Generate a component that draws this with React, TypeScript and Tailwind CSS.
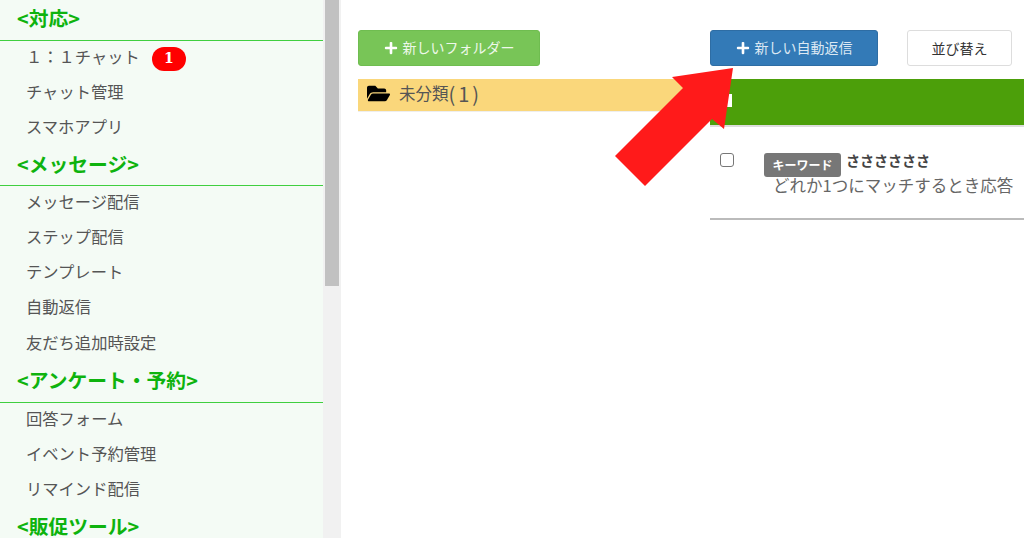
import { FaFolderOpen, FaPlus } from "react-icons/fa";

const sections = [
  { title: "<対応>", height: "h-[41px]", items: ["１：１チャット", "チャット管理", "スマホアプリ"] },
  { title: "<メッセージ>", height: "h-[39px]", items: ["メッセージ配信", "ステップ配信", "テンプレート", "自動返信", "友だち追加時設定"] },
  { title: "<アンケート・予約>", height: "h-[41px]", items: ["回答フォーム", "イベント予約管理", "リマインド配信"] },
  { title: "<販促ツール>", height: "h-[40px]", items: [] as string[] },
];

function Sidebar() {
  return (
    <aside className="w-[323px] shrink-0 bg-[#f4fbf5] overflow-hidden">
      {sections.map((s) => (
        <div key={s.title}>
          <div className={`${s.height} flex items-center pl-[17px] pb-[4px] border-b border-[#3fcf3f] text-[19.8px] leading-none font-bold text-[#0eb30e]`}>
            {s.title}
          </div>
          {s.items.map((item) => (
            <div key={item} className="h-[35.25px] flex items-center pl-[26px] text-[16.3px] text-[#555555]">
              <span className="pb-[5px]">{item}</span>
              {item === "１：１チャット" && (
                <span className="ml-[12px] w-[34px] h-[24px] rounded-full bg-[#ff0000] text-white text-[14px] font-bold flex items-center justify-center font-['DejaVu_Serif',serif]">
                  1
                </span>
              )}
            </div>
          ))}
        </div>
      ))}
    </aside>
  );
}

function Scrollbar() {
  return (
    <div className="w-[18px] shrink-0 bg-[#f1f1f1] pl-[2px] pr-[2px]">
      <div className="h-[286px] bg-[#c1c1c1]" />
    </div>
  );
}

function Arrow() {
  return (
    <svg className="absolute left-[610px] top-[64px]" width="128" height="126" viewBox="610 64 128 126">
      <polygon points="672,77 733,68 724,129 712,119 645,186 615,156 683,88" fill="#ff1a1a" />
    </svg>
  );
}

export default function App() {
  return (
    <div className="relative w-[1024px] h-[538px] overflow-hidden bg-white flex font-['Noto_Sans_CJK_JP','Noto_Sans',sans-serif]">
      <Sidebar />
      <Scrollbar />
      <main className="flex-1 flex pt-[30px] pl-[17px] min-w-0">
        <div className="w-[352px] shrink-0">
          <button className="w-[182px] h-[36px] rounded-[3px] bg-[#78c557] border border-[#6fbd50] text-[#eef8ea] text-[14px] flex items-center justify-center gap-[5px]">
            <FaPlus className="text-white text-[14px]" />
            <span className="pb-[1px]">新しいフォルダー</span>
          </button>
          <div className="mt-[13px] h-[33px] bg-[#fad77b] border-b border-[#eeeeee] flex items-center pl-[9px] pb-[3px] text-[16.5px] text-[#555555]">
            <FaFolderOpen className="text-black text-[23px] mr-[9px]" />
            未分類<span className="text-[20px] tracking-[3px]">(1)</span>
          </div>
        </div>
        <div className="flex-1 min-w-0">
          <div className="flex pr-[12px]">
            <button className="w-[168px] h-[36px] rounded-[3px] bg-[#337ab7] border border-[#2e6da4] text-[#dce8f3] text-[14px] flex items-center justify-center gap-[5px]">
              <FaPlus className="text-white text-[14px]" />
              <span className="pb-[1px]">新しい自動返信</span>
            </button>
            <button className="ml-auto w-[105px] h-[36px] rounded-[3px] bg-white border border-[#dddddd] text-[#333333] text-[14px]">
              並び替え
            </button>
          </div>
          <div className="mt-[13px] h-[48px] bg-[#4c9f0a] border-b-2 border-[#dddddd] pt-[15px] pl-[12px]">
            <div className="w-[10px] h-[13px] bg-white" />
          </div>
          <div className="h-[93px] border-b-2 border-[#bbbbbb] flex pt-[26px] pl-[10px]">
            <input type="checkbox" readOnly className="w-[14px] h-[14px] appearance-none rounded-[3px] border border-[#777777] bg-white" />
            <div className="ml-[30px] min-w-0">
              <div className="flex items-center h-[24px]">
                <span className="w-[77px] h-[24px] rounded-[3px] bg-[#777777] text-white text-[12px] font-bold flex items-center justify-center">
                  キーワード
                </span>
                <span className="ml-[5px] pb-[9px] text-[14px] font-bold text-[#444444]">ささささささ</span>
              </div>
              <div className="ml-[9px] -mt-[2px] whitespace-nowrap text-[16.5px] leading-[20px] text-[#666666]">どれか1つにマッチするとき応答</div>
            </div>
          </div>
        </div>
      </main>
      <Arrow />
    </div>
  );
}
